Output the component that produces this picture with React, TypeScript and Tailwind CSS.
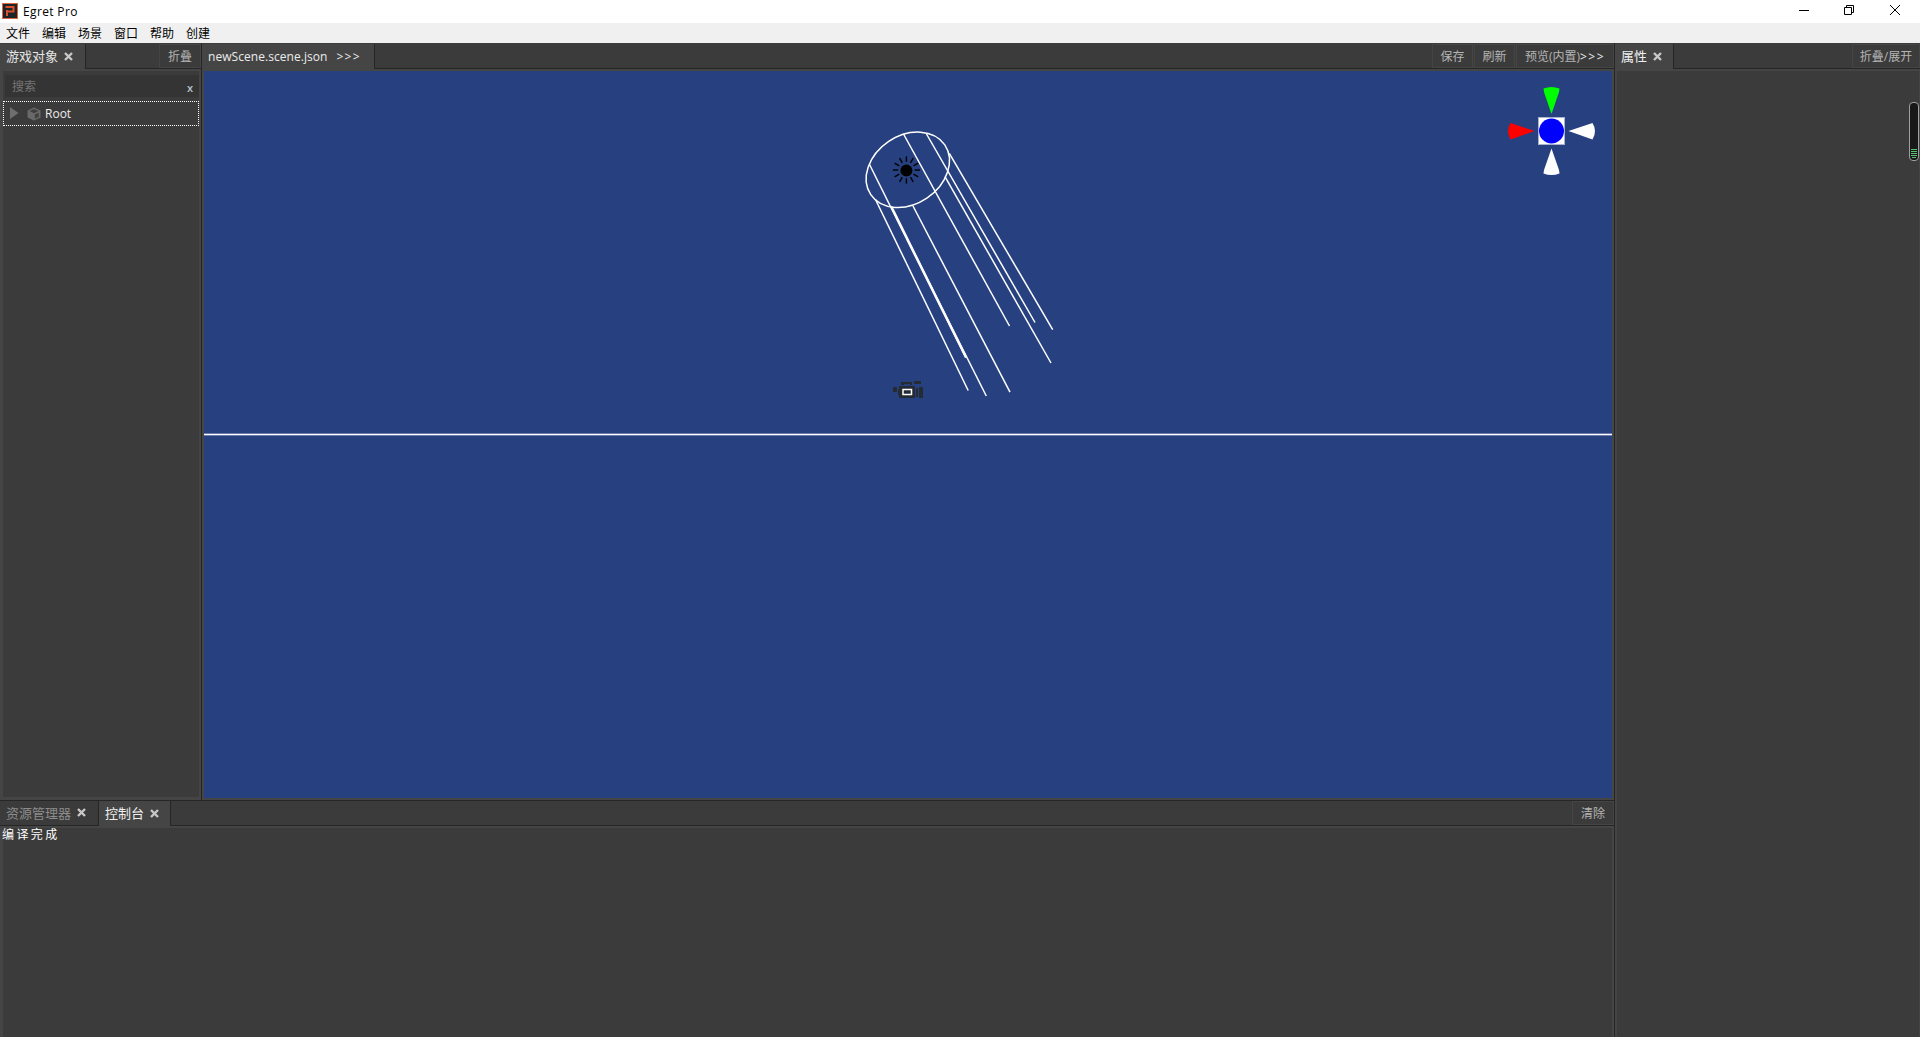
import React from "react";

const UI = "font-['Open_Sans','Noto_Sans_CJK_SC',sans-serif]";

const rays: number[][] = [
  [875.5, 199.5, 968.2, 390.5],
  [869.3, 164, 965.7, 357.7],
  [890.7, 206, 986.3, 396],
  [913, 206, 1010, 392.2],
  [903.5, 134, 1009.5, 326],
  [926.5, 134, 1035, 322.5],
  [945, 176.7, 1051, 363],
  [949.3, 153.3, 1052.7, 329.7],
];

const sunAngles = [0, 30, 60, 90, 120, 150, 180, 210, 240, 270, 300, 330];

function Close() {
  return (
    <svg width="9" height="9" viewBox="0 0 9 9" className="ml-[6px] mt-[-1px] shrink-0">
      <path d="M1 1L8 8M8 1L1 8" stroke="#c8c8c8" strokeWidth="2.4" />
    </svg>
  );
}

function BarButton({ children, className = "" }: { children: React.ReactNode; className?: string }) {
  return (
    <div
      className={
        "flex h-[24px] shrink-0 items-center justify-center whitespace-nowrap border border-[#454545] pt-[2px] text-[12px] leading-none text-[#b4b4b4] " +
        className
      }
    >
      {children}
    </div>
  );
}

function Scene() {
  return (
    <svg width="1408" height="727" viewBox="204 71 1408 727" className="block">
      <rect x="204" y="71" width="1408" height="727" fill="#27407f" />
      <rect x="204" y="433" width="1408" height="3" fill="#6c7dab" />
      <rect x="204" y="434" width="1408" height="1" fill="#fff" />
      <g stroke="#fff" strokeWidth="1.5" fill="none">
        <ellipse cx="907.8" cy="169.8" rx="44.6" ry="34.2" transform="rotate(-33.9 907.8 169.8)" />
        {rays.map((r, i) => (
          <line key={i} x1={r[0]} y1={r[1]} x2={r[2]} y2={r[3]} />
        ))}
        <line x1="891.7" y1="207" x2="966.2" y2="357.5" strokeWidth="2" />
      </g>
      <circle cx="906.4" cy="170.4" r="6" fill="#000" />
      {sunAngles.map((a) => (
        <line key={a} x1="914.6" y1="170" x2="920" y2="170" stroke="#000" strokeWidth="1.4" transform={`rotate(${a} 906.4 170)`} />
      ))}
      <path
        d="M901 382h11v3h-2v-1h-6v1h-3zM914 381h7v3h-7zM893 387h4v5h-4zM899 386h16v12h-16zM898 389h1v6h-1zM916 388h2v9h-2zM919 387h4v11h-4z"
        fill="#252b33"
      />
      <rect x="903" y="389.5" width="8.5" height="5" fill="#252b33" stroke="#fff" strokeWidth="1.5" />
      <path d="M1543.5 88.5Q1551.5 85.5 1559.5 88.5L1559 92L1551.5 114L1544 92Z" fill="#00ff00" />
      <path d="M1543.5 173.5Q1551.5 176.5 1559.5 173.5L1559 170L1551.5 148.500L1544 170Z" fill="#fff" />
      <path d="M1510.500 123Q1505.500 131 1510.500 139.500L1534.500 131Z" fill="#ff0000" />
      <path d="M1592.500 123Q1597.500 131 1592.500 139.500L1568.500 131Z" fill="#fff" />
      <rect x="1538.5" y="117.5" width="26" height="27" fill="#fff" stroke="#a9b3cc" />
      <circle cx="1551.5" cy="131" r="12.5" fill="#0000ff" />
    </svg>
  );
}

function TitleBar() {
  return (
    <header className="flex h-[23px] shrink-0 items-center bg-white text-black">
      <svg width="16" height="16" viewBox="0 0 16 16" className="ml-[2px] mt-[-1px]">
        <rect x="0.5" y="0.5" width="15" height="15" fill="#1c2427" stroke="#d8673a" />
        <path d="M3.500 4H11.500V8.500H6" fill="none" stroke="#d8502e" strokeWidth="2" />
        <path d="M5 7V13" fill="none" stroke="#d8502e" strokeWidth="2" />
      </svg>
      <span className="ml-[5px] text-[12px] leading-none tracking-[0.35px]">Egret Pro</span>
      <svg width="106" height="20" viewBox="0 0 106 20" className="ml-auto mr-[17px] mt-[-3px]" fill="none" stroke="#000">
        <path d="M2 10.5H12" />
        <path d="M47.5 7.5H54.5V14.5H47.5ZM49.5 7.5V5.5H56.5V12.5H54.5" />
        <path d="M93 5L103 15M103 5L93 15" />
      </svg>
    </header>
  );
}

export default function App() {
  return (
    <div className={"flex h-[1037px] w-[1920px] flex-col overflow-hidden bg-[#454545] " + UI}>
      <TitleBar />
      <nav className="flex h-[20px] shrink-0 items-center gap-[12px] bg-[#f0f0f0] pl-[6px] pt-[2px] text-[12px] leading-none text-black">
        {["文件", "编辑", "场景", "窗口", "帮助", "创建"].map((m) => (
          <span key={m} className="w-[24px] whitespace-nowrap">{m}</span>
        ))}
      </nav>
      <div className="flex h-[994px]">
        <div className="flex w-[1614px] flex-col">
          <div className="flex h-[757px]">
            <aside className="flex w-[201px] flex-col">
              <div className="flex h-[26px] border-t border-[#3a3f3b]">
                <div className="flex w-[85px] items-center whitespace-nowrap pl-[6px] text-[13px] leading-none text-[#e6e6e6]">
                  游戏对象
                  <Close />
                </div>
                <div className="flex flex-1 justify-end border-b border-l border-[#262626] bg-[#3b3b3b]">
                  <BarButton className="w-[42px]">折叠</BarButton>
                </div>
              </div>
              <div className="mb-[3px] ml-[3px] mr-[2px] mt-[2px] flex-1 bg-[#3b3b3b] pt-[4px]">
                <div className="ml-[2px] flex h-[22px] items-center justify-between bg-[#343434] pl-[7px] pr-[6px] pt-[2px] text-[12px] leading-none text-[#747474]">
                  搜索
                  <span className="text-[11px] font-semibold text-[#b8c0c8]">x</span>
                </div>
                <div className="mt-[4px] flex h-[25px] items-center border border-dotted border-white pl-[6px] text-[12px] leading-none text-[#ececec]">
                  <svg width="9" height="12" viewBox="0 0 9 12" className="mt-[-1px]">
                    <path d="M0 0L8.5 6L0 12Z" fill="#6e6e6e" />
                  </svg>
                  <svg width="14" height="14" viewBox="0 0 14 14" className="ml-[8px]">
                    <path d="M7 0.5L13.500 3.5V10.5L7 13.5L0.500 10.5V3.5Z" fill="#696969" />
                    <path d="M2.5 4L7 2L11.5 4L7 6.2Z" fill="#3f3f3f" />
                    <path d="M7.8 7.5L11.8 5.7V9.8L7.8 11.8Z" fill="#404040" />
                  </svg>
                  <span className="ml-[4px]">Root</span>
                </div>
              </div>
            </aside>
            <section className="flex w-[1413px] flex-col border-l border-[#262626]">
              <div className="flex h-[26px] border-t border-[#3a3f3b]">
                <div className="flex w-[172px] items-center whitespace-nowrap pl-[6px] text-[12px] leading-none tracking-[0.05px] text-[#ececec]">
                  newScene.scene.json
                  <span className="ml-[9px] tracking-[1.3px]">&gt;&gt;&gt;</span>
                </div>
                <div className="flex flex-1 justify-end gap-px border-b border-l border-[#262626] bg-[#3b3b3b]">
                  <BarButton className="w-[41px]">保存</BarButton>
                  <BarButton className="w-[41px]">刷新</BarButton>
                  <BarButton className="w-[98px]">
                    预览(内置)<span className="tracking-[1.5px] text-[#ececec]">&gt;&gt;&gt;</span>
                  </BarButton>
                </div>
              </div>
              <div className="ml-[2px] mt-[2px]">
                <Scene />
              </div>
            </section>
          </div>
          <section className="flex flex-1 flex-col">
            <div className="flex h-[26px] border-t border-[#262626]">
              <div className="flex w-[99px] items-center whitespace-nowrap border-b border-r border-[#262626] bg-[#3b3b3b] pl-[6px] text-[13px] leading-none text-[#8c8c8c]">
                资源管理器
                <Close />
              </div>
              <div className="flex w-[71px] items-center whitespace-nowrap pl-[6px] text-[13px] leading-none text-[#f0f0f0]">
                控制台
                <Close />
              </div>
              <div className="flex flex-1 justify-end border-b border-l border-[#262626] bg-[#3b3b3b]">
                <BarButton className="w-[42px]">清除</BarButton>
              </div>
            </div>
            <div className="ml-[3px] mr-[2px] mt-[2px] flex-1 bg-[#3b3b3b] pt-px text-[12px] leading-[12px] text-white">
              <span className="-ml-px tracking-[2.4px]">编译完成</span>
            </div>
          </section>
        </div>
        <aside className="relative flex w-[306px] flex-col border-l border-[#262626]">
          <div className="flex h-[26px] border-t border-[#3a3f3b]">
            <div className="flex w-[58px] items-center whitespace-nowrap pl-[6px] text-[13px] leading-none text-[#f0f0f0]">
              属性
              <Close />
            </div>
            <div className="flex flex-1 justify-end border-b border-l border-[#262626] bg-[#3b3b3b]">
              <BarButton className="w-[68px]">折叠/展开</BarButton>
            </div>
          </div>
          <div className="ml-[2px] mr-px mt-[2px] flex-1 bg-[#3b3b3b]" />
          <div className="absolute right-[1px] top-[59px] flex h-[59px] w-[10px] flex-col items-center justify-end gap-px rounded-[4px] border border-[#a0a0a0] bg-[#181818] pb-[2px]">
            <i className="h-px w-[6px] bg-[#56c271]" />
            <i className="h-px w-[6px] bg-[#56c271]" />
            <i className="h-px w-[6px] bg-[#56c271]" />
            <i className="h-px w-[6px] bg-[#56c271]" />
            <i className="h-px w-[4px] bg-[#56c271]" />
          </div>
        </aside>
      </div>
    </div>
  );
}
